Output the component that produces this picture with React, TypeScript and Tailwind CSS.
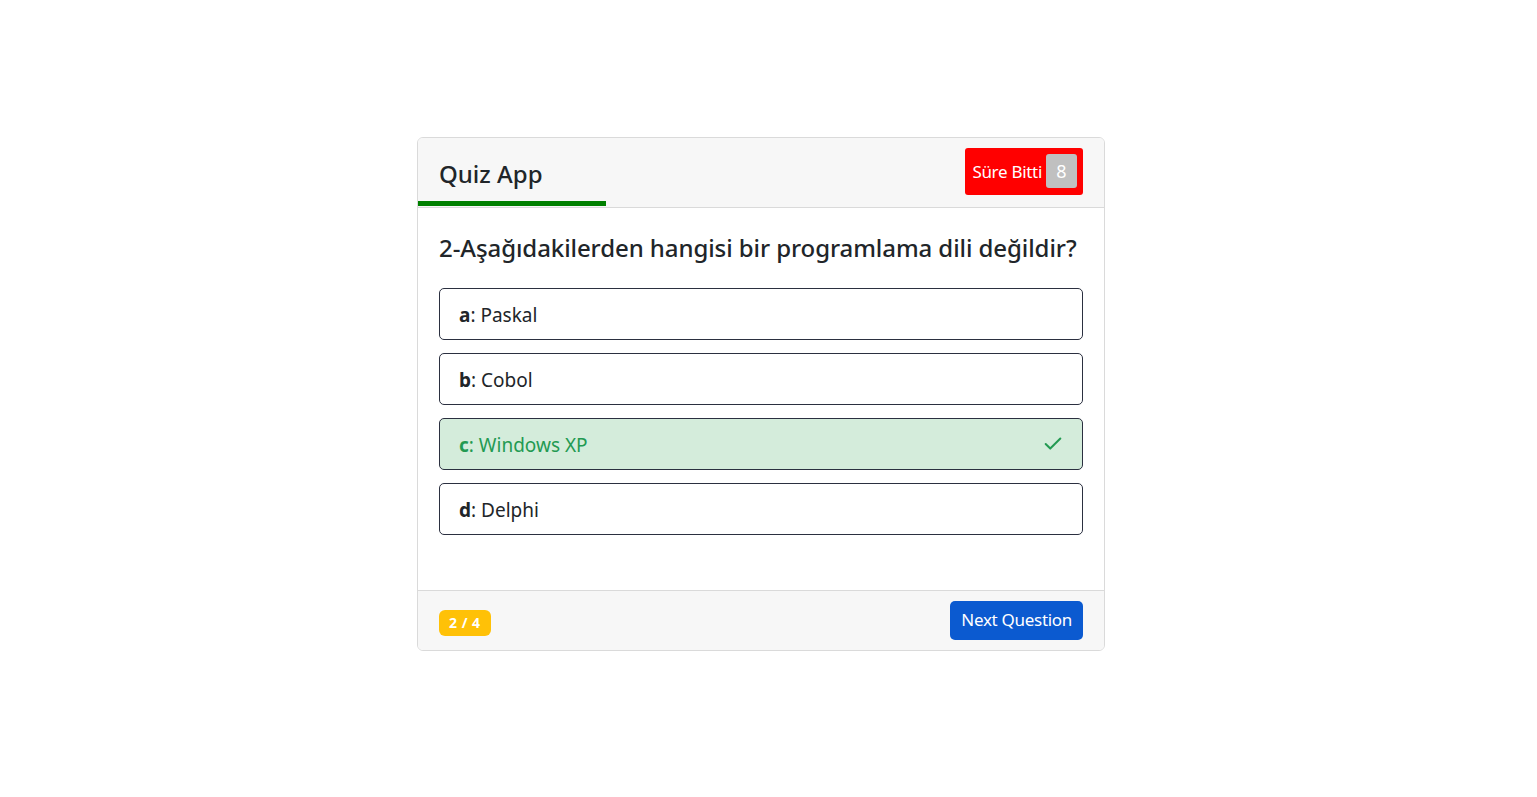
import { Check } from 'lucide-react';

const OPTIONS = [
  { key: 'a', text: 'Paskal' },
  { key: 'b', text: 'Cobol' },
  { key: 'c', text: 'Windows XP', correct: true },
  { key: 'd', text: 'Delphi' },
];

export default function App() {
  return (
    <div
      className="min-h-screen bg-white text-[#212529]"
      style={{ fontFamily: '"Noto Sans", "Open Sans", sans-serif' }}
    >
      <div className="pt-[137px] pl-[417px]">
        <div className="w-[688px] rounded-md border border-[#dadada] overflow-hidden">
          {/* Header */}
          <div className="relative h-[70px] bg-[#f7f7f7] border-b border-[#dadada] flex items-center justify-between px-[21px]">
            <h5 className="text-[24px] leading-none mt-[2px] font-medium">Quiz App</h5>
            <div className="h-[47px] -mt-[3px] bg-[#ff0000] rounded-[3px] flex items-center pl-[7px] pr-[6px] gap-[4px]">
              <span className="text-white text-[17px] tracking-[-0.3px] mt-[2px]">Süre Bitti</span>
              <span className="w-[31px] h-[34px] rounded-[3px] bg-[#c0c0c0] text-white text-[18px] flex items-center justify-center">
                8
              </span>
            </div>
            <div className="absolute left-0 bottom-[1px] w-[188px] h-[5px] bg-[#008000]" />
          </div>

          {/* Body */}
          <div className="px-[21px] pt-[24px] pb-[55px]">
            <h4 className="text-[24px] leading-[32px] font-medium mb-[24px] tracking-[-0.08px]">
              2-Aşağıdakilerden hangisi bir programlama dili değildir?
            </h4>
            <div className="flex flex-col gap-[13px]">
              {OPTIONS.map((o) => (
                <div
                  key={o.key}
                  className={`h-[52px] rounded-[5px] border border-[#2b3040] flex items-center justify-between pl-[19px] pr-[20px] text-[19px] ${
                    o.correct ? 'bg-[#d4ecdb] text-[#239a52]' : 'bg-white text-[#212529]'
                  }`}
                >
                  <span className="mt-[2px]">
                    <b className="font-bold">{o.key}</b>: {o.text}
                  </span>
                  {o.correct && <Check size={22} strokeWidth={2.2} className="text-[#239a52] mr-[-2px]" />}
                </div>
              ))}
            </div>
          </div>

          {/* Footer */}
          <div className="h-[60px] bg-[#f7f7f7] border-t border-[#dadada] flex items-center justify-between px-[21px]">
            <span className="mt-[4px] h-[26px] px-[10px] rounded-[6px] bg-[#ffc107] text-white text-[14px] font-bold flex items-center tracking-[0.5px]">
              2 / 4
            </span>
            <button className="h-[39px] px-[11px] rounded-[5px] bg-[#0b5ad0] text-white text-[17px] tracking-[-0.3px] mb-[1px]">
              Next Question
            </button>
          </div>
        </div>
      </div>
    </div>
  );
}
